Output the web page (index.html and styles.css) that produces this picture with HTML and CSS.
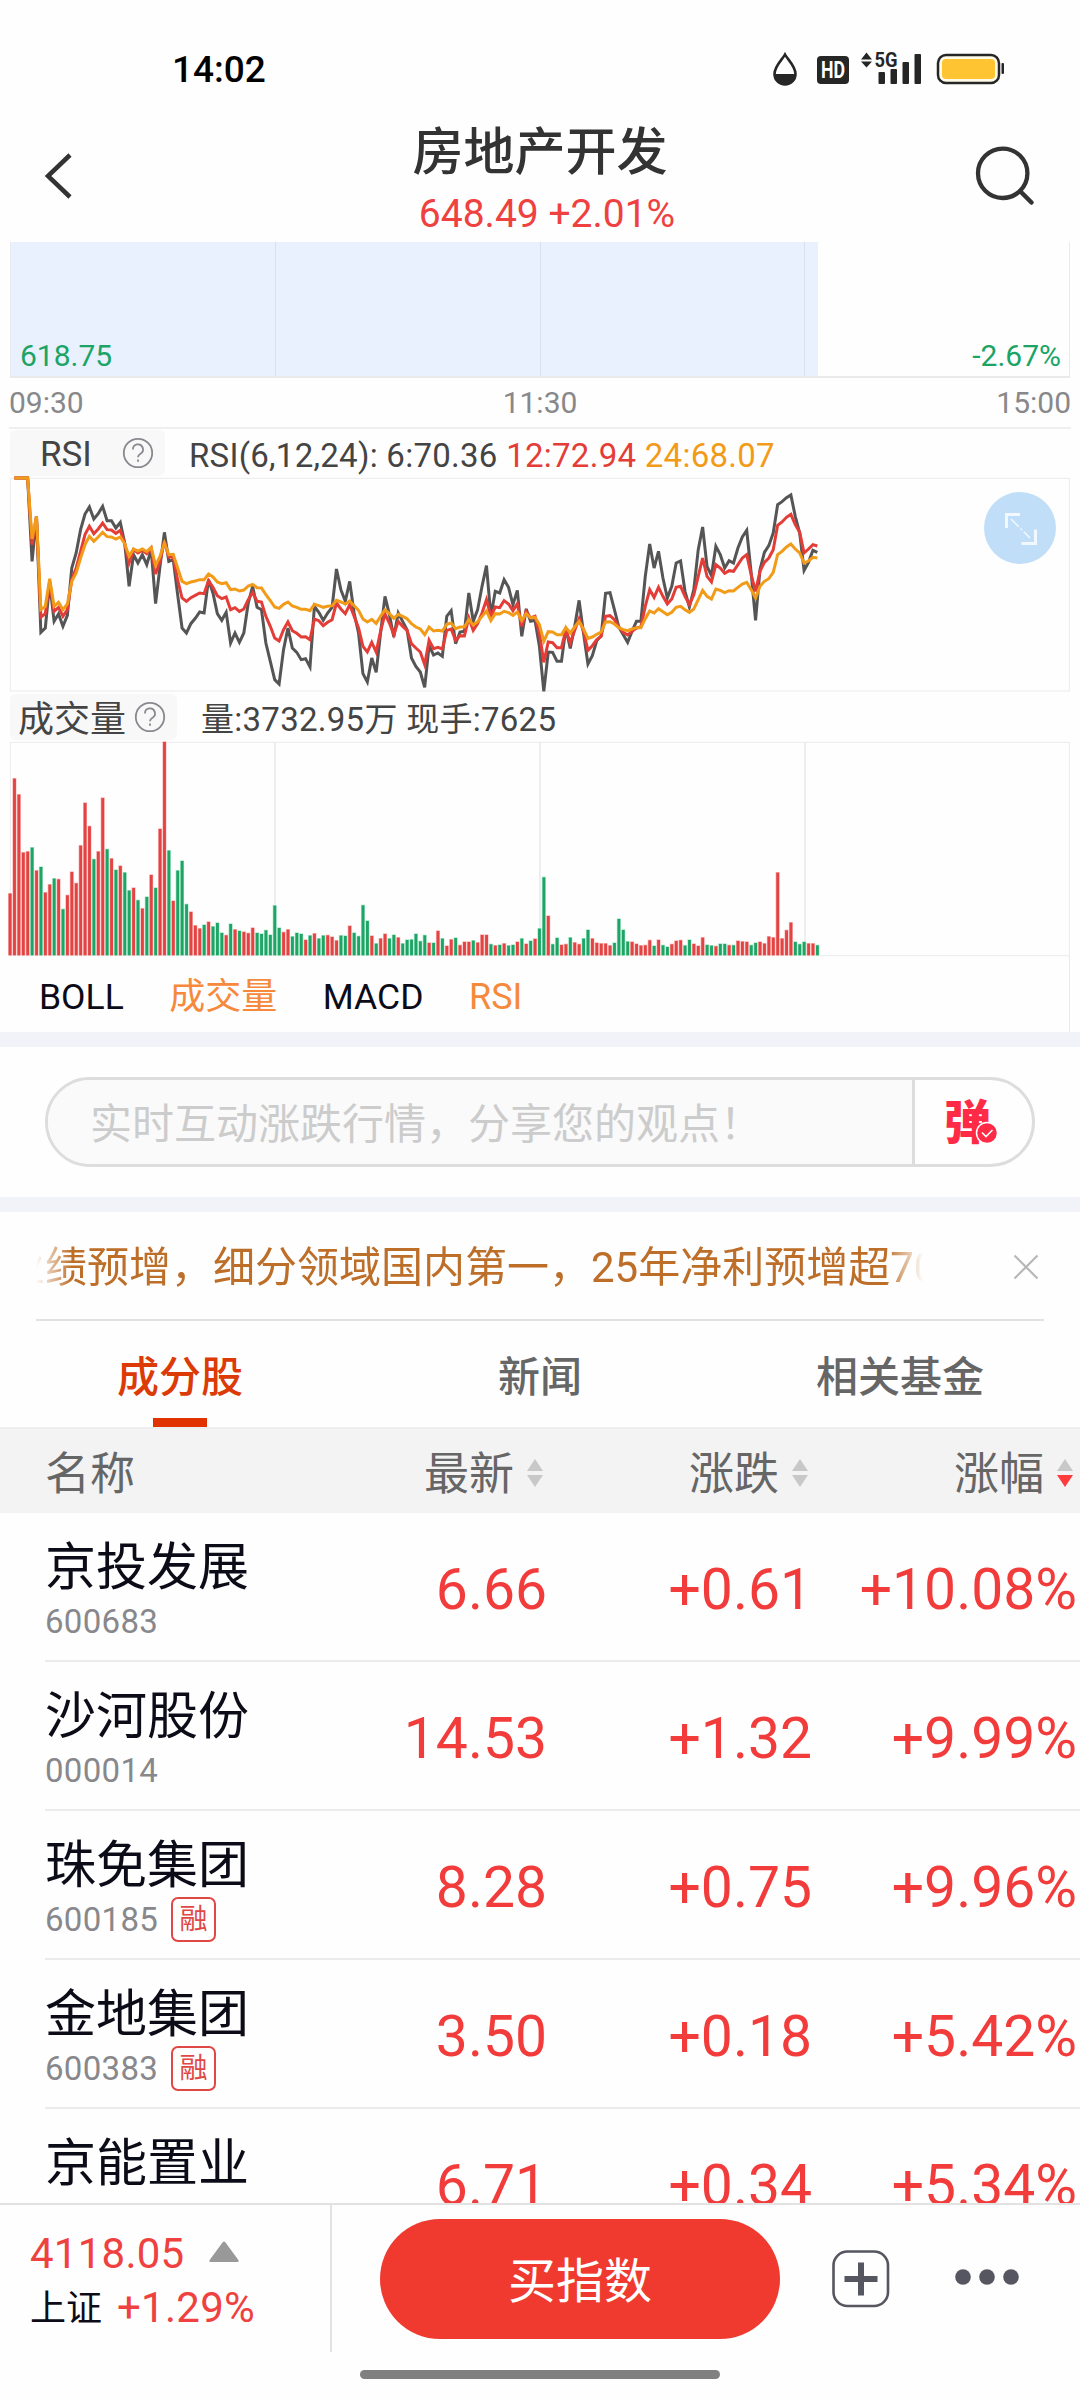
FILE: index.html
```
<!DOCTYPE html>
<html lang="zh-CN">
<head>
  <meta charset="utf-8">
  <title>房地产开发</title>
  <link rel="stylesheet" href="styles.css">
</head>
<body>
<div class="page">

  <!-- Status bar -->
  <div class="status">
    <span class="clock">14:02</span>
    <svg class="status-icons" width="240" height="40" viewBox="770 50 240 40">
      <path d="M785 54.500C788 60 795.500 66 795.500 74a10.500 10.500 0 0 1-21 0C774.500 66 782 60 785 54.500z" fill="none" stroke="#262626" stroke-width="2.600"/>
      <path d="M774 74h22a11 11 0 0 1-22 0z" fill="#262626"/>
      <rect x="817" y="56" width="32" height="28" rx="4" fill="#262626"/>
      <text x="833" y="78" class="hd" textLength="24" lengthAdjust="spacingAndGlyphs">HD</text>
      <path d="M861 59.500l5.500-7 5.500 7zM861 61.500h11l-5.500 6z" fill="#262626"/>
      <text x="886" y="67" class="net" textLength="23" lengthAdjust="spacingAndGlyphs">5G</text>
      <g fill="#262626">
        <rect x="878.500" y="72" width="6.500" height="12" rx="1"/>
        <rect x="890.500" y="69" width="6.500" height="15" rx="1"/>
        <rect x="902.500" y="62" width="6.500" height="22" rx="1"/>
        <rect x="914.500" y="54" width="6.500" height="30" rx="1"/>
        <rect x="1001.500" y="63" width="2.500" height="11" rx="1"/>
      </g>
      <rect x="938" y="55" width="61" height="28" rx="8" fill="#fffbe8" stroke="#262626" stroke-width="2.500"/>
      <rect x="942" y="59" width="53" height="20" rx="4" fill="#ffc431"/>
    </svg>
  </div>

  <!-- Header -->
  <div class="header">
    <svg width="50" height="60" viewBox="40 146 50 60"><path d="M70 155L48 176l22 21" fill="none" stroke="#333" stroke-width="4.500"/></svg>
    <div class="heading">
      <h1>房地产开发</h1>
      <p>648.49 +2.01%</p>
    </div>
    <svg width="66" height="66" viewBox="972 143 66 66">
      <circle cx="1002.700" cy="173.300" r="24.700" fill="none" stroke="#333" stroke-width="4.300"/>
      <path d="M1020 191l11.500 11.500" stroke="#333" stroke-width="4.500" stroke-linecap="round"/>
    </svg>
  </div>

  <!-- Price chart (scrolled, bottom part only) -->
  <div class="price">
    <div class="price-fill"></div>
    <i class="vline q1"></i><i class="vline q2"></i><i class="vline q3"></i>
    <span>618.75</span>
    <span>-2.67%</span>
  </div>
  <div class="axis"><span>09:30</span><span>11:30</span><span>15:00</span></div>

  <!-- RSI -->
  <div class="ind-head">
    <div class="ind-tab rsi-tab">RSI
      <svg class="help" width="32" height="32" viewBox="0 0 32 32"><circle cx="16" cy="16" r="14.200"/><path d="M11 12.500a5 5 0 1 1 7.500 4.200c-1.800 1-2.500 1.800-2.500 3.600M16 22.500v2.300"/></svg>
    </div>
    <div class="ind-values">RSI(6,12,24): 6:70.36 <b class="c12">12:72.94</b> <b class="c24">24:68.07</b></div>
  </div>
  <div class="rsi-box">
    <svg class="plot" id="rsi" width="1060" height="213" viewBox="31 175 3180 639"></svg>
    <svg class="expand" width="72" height="72" viewBox="0 0 72 72">
      <circle cx="36" cy="36" r="36" fill="#c0def7"/>
      <path d="M22.500 36V22.500H36M37.500 51.500H51.500V37.500" fill="none" stroke="#f2f8fe" stroke-width="3"/>
      <path d="M27 27l19 19" stroke="#f2f8fe" stroke-width="1.500" stroke-dasharray="11 2.500 2 2.500"/>
    </svg>
  </div>

  <!-- Volume -->
  <div class="ind-head vol-head">
    <div class="ind-tab vol-tab">成交量
      <svg class="help" width="32" height="32" viewBox="0 0 32 32"><circle cx="16" cy="16" r="14.200"/><path d="M11 12.500a5 5 0 1 1 7.500 4.200c-1.800 1-2.500 1.800-2.500 3.600M16 22.500v2.300"/></svg>
    </div>
    <div class="ind-values">量:3732.95万 现手:7625</div>
  </div>
  <div class="vol-box">
    <svg class="plot" id="vol" width="1060" height="214" viewBox="31 157 3180 642"></svg>
  </div>
  <div class="ind-list"><span>BOLL</span><span class="on">成交量</span><span>MACD</span><span class="on">RSI</span></div>

  <div class="band"></div>

  <!-- Comment box -->
  <div class="comment">
    <div class="comment-box">
      <div class="placeholder">实时互动涨跌行情，分享您的观点！</div>
      <div class="danmu">
        <span>弹</span>
        <svg width="24" height="24" viewBox="0 0 24 24"><circle cx="12" cy="12" r="10.500" fill="#ff2a45" stroke="#fff" stroke-width="1.500"/><path d="M7 11.500l4 4 6.500-6.500" fill="none" stroke="#fff" stroke-width="1.600"/></svg>
      </div>
    </div>
  </div>

  <div class="band"></div>

  <!-- Scrolling notice -->
  <div class="notice">
    <div class="marquee"><span>业绩预增，细分领域国内第一，25年净利预增超70%</span></div>
    <svg width="26" height="26" viewBox="0 0 26 26"><path d="M1.500 1.500l23 23M24.500 1.500l-23 23" stroke="#b8b8b8" stroke-width="2.200"/></svg>
  </div>

  <div class="tabs">
    <div class="tab active">成分股</div>
    <div class="tab">新闻</div>
    <div class="tab">相关基金</div>
  </div>

  <!-- Stock table -->
  <div class="thead">
    <span class="name">名称</span>
    <span class="col c1">最新<svg width="16" height="28" viewBox="0 0 16 28"><path d="M0 12L8 0l8 12z"/><path d="M0 16h16L8 28z"/></svg></span>
    <span class="col c2">涨跌<svg width="16" height="28" viewBox="0 0 16 28"><path d="M0 12L8 0l8 12z"/><path d="M0 16h16L8 28z"/></svg></span>
    <span class="col c3">涨幅<svg width="16" height="28" viewBox="0 0 16 28"><path d="M0 12L8 0l8 12z"/><path class="down" d="M0 16h16L8 28z"/></svg></span>
  </div>
  <div class="rows">
    <div class="row">
      <div class="name"><h2>京投发展</h2><p>600683</p></div>
      <span class="col c1">6.66</span><span class="col c2">+0.61</span><span class="col c3">+10.08%</span>
    </div>
    <div class="row">
      <div class="name"><h2>沙河股份</h2><p>000014</p></div>
      <span class="col c1">14.53</span><span class="col c2">+1.32</span><span class="col c3">+9.99%</span>
    </div>
    <div class="row">
      <div class="name"><h2>珠免集团</h2><p>600185<em>融</em></p></div>
      <span class="col c1">8.28</span><span class="col c2">+0.75</span><span class="col c3">+9.96%</span>
    </div>
    <div class="row">
      <div class="name"><h2>金地集团</h2><p>600383<em>融</em></p></div>
      <span class="col c1">3.50</span><span class="col c2">+0.18</span><span class="col c3">+5.42%</span>
    </div>
    <div class="row">
      <div class="name"><h2>京能置业</h2><p></p></div>
      <span class="col c1">6.71</span><span class="col c2">+0.34</span><span class="col c3">+5.34%</span>
    </div>
  </div>

  <!-- Bottom bar -->
  <div class="bottom">
    <div class="index">
      <div class="line">4118.05 <svg width="30" height="21" viewBox="0 0 30 21"><path d="M1.500 21Q-.5 20.500 1 18.500L13.500 1.500q1.500-2 3 0L29 18.500q1.500 2-.5 2.500z" fill="#999"/></svg></div>
      <div class="line"><span>上证</span>+1.29%</div>
    </div>
    <div class="buy">买指数</div>
    <svg class="plus" width="58" height="58" viewBox="0 0 58 58"><rect x="1.500" y="1.500" width="54.500" height="54.500" rx="14" fill="none" stroke="#555660" stroke-width="2.600"/><path d="M12.500 29h33M29 12.500v33" stroke="#555660" stroke-width="6"/></svg>
    <svg class="more" width="64" height="16" viewBox="0 0 64 16" fill="#555660"><circle cx="8" cy="8" r="7.800"/><circle cx="32" cy="8" r="7.800"/><circle cx="56" cy="8" r="7.800"/></svg>
  </div>
  <div class="home"></div>
</div>

<script src="chart.js"></script>
</body>
</html>
```

FILE: styles.css
```
* {
  box-sizing: border-box;
  margin: 0;
  padding: 0;
}

body {
  width: 1080px;
  height: 2400px;
  overflow: hidden;
  background: #fefefe;
  font-family: Roboto, "Noto Sans CJK SC", sans-serif;
}

svg { display: block; flex: none; }

.page {
  display: flex;
  flex-direction: column;
  height: 2400px;
}

.page > div { flex: none; }

/* Status bar */
.status {
  height: 118px;
  padding: 22px 70px 0 172px;
  display: flex;
  justify-content: space-between;
  align-items: center;
}

.clock {
  font-size: 37px;
  font-weight: 500;
  line-height: 44px;
}

.hd, .net {
  fill: #fff;
  font-size: 23px;
  font-weight: 700;
  text-anchor: middle;
}

.net { fill: #262626; font-size: 21px; }

/* Header */
.header {
  height: 124px;
  padding: 0 42px 0 40px;
  display: flex;
  justify-content: space-between;
}

.header > svg { margin-top: 28px; }
.header > svg:last-child { margin-top: 25px; }

.heading { text-align: center; padding-left: 32px; }

h1 {
  color: #333;
  font-size: 51px;
  font-weight: 500;
  line-height: 68px;
  padding-top: 1px;
  margin-left: -14px;
}

.heading p {
  color: #ee4140;
  font-size: 39px;
  line-height: 55px;
}

/* Price chart */
.price {
  position: relative;
  height: 136px;
  margin: 0 10px;
  padding: 0 8px 0 9px;
  border: 1px solid #eaeaec;
  border-top: 0;
  border-bottom-width: 2px;
  display: flex;
  justify-content: space-between;
  align-items: flex-end;
  color: #1ba466;
  font-size: 30px;
  line-height: 40px;
}

.price-fill {
  position: absolute;
  left: 0;
  top: 0;
  width: 807px;
  height: 134px;
  background: #e9f1fe;
}

.vline {
  position: absolute;
  top: 0;
  width: 1px;
  height: 134px;
  background: #d7e0f0;
}

.q1 { left: 264px; }
.q2 { left: 529px; }
.q3 { left: 793px; }

.price span { position: relative; }

.axis {
  height: 51px;
  margin: 0 9px;
  border-bottom: 2px solid #efefef;
  display: flex;
  justify-content: space-between;
  color: #88888a;
  font-size: 30px;
  line-height: 50px;
}

/* Indicators */
.ind-head {
  height: 49px;
  padding: 1px 10px 0;
  display: flex;
  align-items: flex-start;
}

.vol-head { height: 51px; padding-top: 3px; }

.ind-tab {
  height: 46px;
  border-radius: 6px;
  background: #f8f8f9;
  display: flex;
  align-items: center;
  justify-content: space-between;
  color: #444;
  font-size: 35px;
  line-height: 46px;
}

.rsi-tab { width: 155px; padding: 4px 11px 0 30px; }
.rsi-tab .help { margin-top: -4px; }
.vol-tab { width: 167px; padding: 5px 11px 0 8px; font-size: 36px; }

.help {
  fill: none;
  stroke: #88888e;
  stroke-width: 1.8;
}

.vol-tab .help { margin-top: -5px; }

.ind-values {
  margin-left: 24px;
  color: #444;
  font-size: 33px;
  letter-spacing: .27px;
  line-height: 51px;
  white-space: pre;
}

.ind-values b { font-weight: 400; }
.c12 { color: #e43d37; }
.c24 { color: #f29b18; }

.rsi-box, .vol-box {
  position: relative;
  height: 213px;
  margin: 0 10px;
}

.vol-box { height: 214px; }

.plot { overflow: visible; }

.expand {
  position: absolute;
  right: 14px;
  top: 14px;
}

.ind-list {
  height: 76px;
  margin: 0 10px;
  padding-left: 29px;
  border-right: 1px solid #eaeaec;
  display: flex;
  gap: 45.5px;
  color: #0c0c18;
  font-size: 35.5px;
  line-height: 82px;
}

.on { color: #f6893b; font-size: 36px; }

.band { height: 15px; background: #f1f3f8; }

/* Comment box */
.comment { height: 150px; padding: 30px 45px; }

.comment-box {
  height: 90px;
  border: 3px solid #ddd;
  border-radius: 45px;
  overflow: hidden;
  display: flex;
}

.placeholder {
  width: 867px;
  padding-left: 42px;
  background: #fafafa;
  border-right: 3px solid #ddd;
  color: #ccc;
  font-size: 42px;
  line-height: 89px;
}

.danmu {
  position: relative;
  padding-left: 29px;
  color: #ff2a45;
  font-size: 47px;
  font-weight: 900;
  line-height: 85px;
}

.danmu svg { position: absolute; left: 60px; top: 41px; }

/* Notice */
.notice {
  height: 109px;
  margin: 0 36px;
  padding-right: 5px;
  border-bottom: 2px solid #e2e2e2;
  display: flex;
  justify-content: space-between;
  align-items: center;
}

.notice svg { margin-top: 2px; }

.marquee {
  width: 887px;
  overflow: hidden;
  color: #bd6e28;
  font-size: 42px;
  line-height: 106px;
  padding-top: 5px;
  white-space: nowrap;
  -webkit-mask-image: linear-gradient(to right, transparent, #000 36px, #000 850px, transparent);
  mask-image: linear-gradient(to right, transparent, #000 36px, #000 850px, transparent);
}

.marquee span { margin-left: -33px; }

/* Tabs */
.tabs { height: 106px; display: flex; }

.tab {
  position: relative;
  flex: 1;
  text-align: center;
  color: #666;
  font-size: 42px;
  font-weight: 500;
  line-height: 114px;
}

.active { color: #dc3a06; }

.active::after {
  content: "";
  position: absolute;
  left: 153px;
  bottom: 0;
  width: 54px;
  height: 9px;
  background: #e03300;
}

/* Stock table */
.thead, .row {
  display: grid;
  grid-template-columns: 392px 155px 265px 265px;
  align-items: center;
}

.thead {
  height: 86px;
  border-top: 2px solid #eee;
  background: #f3f3f3;
  color: #666;
  font-size: 45px;
  line-height: 82px;
}

.thead > span { padding-top: 5px; }
.thead svg { margin-top: -5px; }

.name { padding-left: 45px; }

.col {
  display: flex;
  justify-content: flex-end;
  align-items: center;
}

.thead .col { gap: 13px; padding-right: 4px; }
.thead svg { fill: #c8c8c8; }
.thead .down { fill: #ff3b3b; }

.rows { height: 690px; overflow: hidden; }

.row {
  position: relative;
  height: 149px;
  color: #f23c3b;
  font-size: 57px;
  line-height: 70px;
}

.row::after {
  content: "";
  position: absolute;
  left: 45px;
  right: 0;
  bottom: 0;
  height: 2px;
  background: #ebebed;
}

.row .col { padding-top: 4px; }

h2 {
  color: #0c0c18;
  font-size: 51px;
  font-weight: 400;
  line-height: 66px;
  padding-top: 4px;
}

.name p {
  display: flex;
  align-items: center;
  gap: 13px;
  height: 44px;
  margin-top: -1px;
  padding-bottom: 1px;
  color: #88888c;
  font-size: 33px;
  letter-spacing: .3px;
  line-height: 44px;
}

em {
  width: 45px;
  height: 45px;
  border: 2px solid #e04846;
  border-radius: 7px;
  color: #e04846;
  font-size: 28px;
  font-style: normal;
  letter-spacing: 0;
  line-height: 42px;
  text-align: center;
}

/* Bottom bar */
.bottom {
  height: 149px;
  border-top: 2px solid #e2e2e2;
  display: flex;
  align-items: flex-start;
}

.index {
  width: 332px;
  height: 147px;
  padding: 21px 0 0 30px;
  border-right: 2px solid #e2e2e2;
  color: #ee4140;
  font-size: 42px;
}

.line {
  display: flex;
  align-items: center;
  gap: 25px;
  height: 55px;
  letter-spacing: .25px;
  line-height: 55px;
}

.line + .line { gap: 15px; height: 53px; }
.line svg { margin-top: -4px; }
.line span { color: #0c0c18; font-size: 36px; padding-top: 4px; letter-spacing: 0; }

.buy {
  width: 400px;
  height: 120px;
  margin: 14px 0 0 48px;
  border-radius: 60px;
  background: #f03a30;
  color: #fff;
  font-size: 48px;
  line-height: 126px;
  text-align: center;
}

.plus { margin: 45px 0 0 52px; }
.more { margin: 64px 0 0 65px; }

.home {
  width: 360px;
  height: 9px;
  margin: 18px auto 0;
  border-radius: 5px;
  background: #808080;
}
```

FILE: chart.js
```
// one point per minute, y grows downwards
const STEP = 13.235;
const X0 = 31;

const dark = [
  175,175,175,175,425,290,638,625,490,605,
  583,620,587,445,400,330,283,262,298,282,
  260,303,303,325,308,370,500,405,430,405,
  435,390,552,440,338,425,420,525,625,640,
  612,596,577,580,480,520,582,602,578,670,
  640,668,640,550,500,563,570,670,725,780,
  793,690,625,685,698,720,717,742,560,578,
  602,580,563,448,510,545,485,580,640,762,
  787,715,758,640,530,585,652,580,605,630,
  715,740,757,803,678,706,700,710,590,573,
  672,637,635,520,605,570,500,438,590,515,
  520,480,503,555,512,650,568,605,602,680,
  815,697,698,725,725,625,686,620,542,640,
  733,708,663,648,521,519,570,622,645,668,
  635,605,605,470,373,445,395,475,535,500,
  430,424,515,562,510,390,322,440,468,380,
  405,445,423,430,385,352,332,460,602,450,
  398,378,340,255,246,234,226,290,340,452,
  428,392,398
];

const red = [
  175,175,175,175,375,290,592,582,485,575,
  563,590,570,480,445,395,345,320,342,328,
  310,330,331,341,332,372,430,390,400,392,
  402,385,463,425,365,412,412,480,535,545,
  534,527,520,522,483,503,528,537,532,570,
  564,575,568,540,518,545,547,590,620,655,
  664,630,607,633,641,652,651,660,598,603,
  618,608,600,550,568,582,555,590,625,680,
  697,668,697,635,583,610,645,605,620,632,
  672,685,697,735,662,687,683,688,632,628,
  662,648,649,595,632,612,580,540,590,562,
  564,543,553,573,552,620,575,595,590,640,
  728,667,669,684,684,630,670,632,597,635,
  692,678,660,650,590,588,600,622,638,646,
  635,625,622,560,510,533,503,530,553,538,
  503,500,530,555,525,470,415,470,487,435,
  445,461,453,455,435,415,405,465,515,455,
  428,415,390,317,307,293,284,315,338,400,
  388,375,379
];

const orange = [
  175,175,175,175,358,290,570,560,477,560,
  548,570,553,485,460,415,375,350,365,352,
  338,351,352,358,352,372,410,388,394,388,
  396,383,437,410,370,405,404,445,485,492,
  487,484,480,480,463,472,487,492,489,510,
  508,514,511,499,494,504,505,525,543,562,
  566,554,547,559,563,569,569,573,554,558,
  563,560,558,542,547,553,544,558,572,598,
  607,599,611,590,570,582,596,584,590,597,
  612,622,628,645,622,634,632,634,614,610,
  627,622,622,600,616,606,590,574,603,582,
  583,575,579,587,577,603,582,594,593,615,
  665,636,637,645,645,624,640,622,605,628,
  656,652,644,637,607,606,613,624,630,633,
  628,624,624,597,574,580,567,576,585,578,
  563,560,570,578,568,540,512,530,538,508,
  512,519,513,514,503,493,488,510,535,500,
  485,477,458,405,395,382,373,388,400,430,
  424,413,415
];

// bar tops, r = up minute, g = down minute
const volume = `
r612 r267 r315 r489 r486 g474 r543 g532 r609 r585
g567 r569 g659 r617 r547 r581 r468 r340 r410 g509
r486 r325 g479 r507 g541 r529 g549 g603 r595 g632
r657 g622 r556 g595 r418 r157 g483 r634 g543 g514
g644 r667 r708 r717 g706 r697 g711 g700 g730 r737
g703 r720 g724 r727 r731 r715 g730 g733 g722 g736
g648 g715 r728 r720 g741 g730 g733 r751 g738 r732
g747 g738 r737 r742 r753 g738 g739 r709 g730 g740
g647 g694 r739 g762 r747 r733 g747 g736 r744 g762
g751 g750 g733 g755 g737 r760 g760 r724 g747 r769
r750 g745 r767 r757 r757 g753 r759 r736 r736 g764
r768 g766 r762 g768 g766 r757 g747 r763 g754 r748
g717 g563 r679 g764 g745 r766 r764 g744 r759 r764
g747 g721 r747 r760 r762 r762 r768 g760 g688 g721
g756 r757 r763 r768 r767 r752 g769 r751 g767 g772
r764 r754 r752 g768 g751 r763 r769 r744 g766 g768
r770 g763 g763 r767 g767 r754 r756 r757 g767 g760
r757 r762 r741 r744 r549 r747 r722 r699 g757 g764
g757 r762 r762 g767`.trim().split(/\s+/);

function line(ys, color) {
  const pts = ys.map((y, i) => (X0 + (i + 1) * STEP).toFixed(1) + ',' + y).join(' ');
  return `<polyline points="${pts}" fill="none" stroke="${color}" stroke-width="9"/>`;
}

document.getElementById('rsi').innerHTML =
  '<rect x="32" y="176" width="3177" height="638" fill="none" stroke="#ebebed" stroke-width="3"/>' +
  line(dark, '#555') + line(red, '#e43d37') + line(orange, '#f29b18');

let bars = '<path d="M32 798V158H3209V798z" fill="none" stroke="#ebebed" stroke-width="3"/>' +
  '<path d="M826 158V797M1621 158V797M2416 158V797" stroke="#ebebed" stroke-width="5"/>';
volume.forEach((v, i) => {
  const top = +v.slice(1);
  const up = v[0] === 'r';
  const x = X0 + i * STEP;
  bars += `<rect x="${x - 6}" y="${top - 2}" width="12" height="${799 - top}" fill="${up ? '#f9b4b2' : '#a6e6c8'}"/>`;
  bars += `<rect x="${x - 4}" y="${top}" width="8.500" height="${797 - top}" fill="${up ? '#e24343' : '#1ea566'}"/>`;
});
document.getElementById('vol').innerHTML = bars;
```
